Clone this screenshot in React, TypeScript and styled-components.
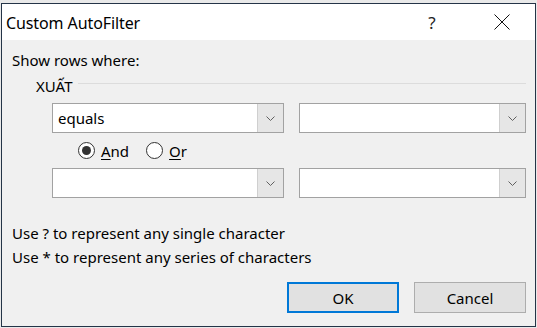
import React from 'react'
import styled, { createGlobalStyle } from 'styled-components'

const Global = createGlobalStyle`
    html, body {
        margin: 0;
        padding: 0;
        background: #f3f3f3;
    }
    body {
        font-family: "Noto Sans", "Liberation Sans", sans-serif;
    }
`

const Page = styled.div`
    width: 537px;
    height: 328px;
    overflow: hidden;
    background: #e9e9e9;
    padding: 3px 0 0 1px;
    box-sizing: border-box;
`

const Window = styled.div`
    width: 535px;
    height: 324px;
    box-sizing: border-box;
    border: 1px solid #243447;
    background: #f0f0f0;
    display: flex;
    flex-direction: column;
    color: #000;
`

const TitleBar = styled.div`
    height: 36px;
    background: #fff;
    display: flex;
    align-items: center;
    padding-left: 4px;
`

const Title = styled.div`
    flex: 1;
    font-size: 16px;
    letter-spacing: -0.1px;
    margin-top: 1px;
`

const CaptionButton = styled.div`
    width: 46px;
    height: 36px;
    display: flex;
    align-items: center;
    justify-content: center;
    font-size: 17px;
    color: #222;
`

const HelpButton = styled(CaptionButton)`
    margin-right: 24px;
`

const CloseButton = styled(CaptionButton)`
    margin-right: 10px;
`

const Body = styled.div`
    flex: 1;
    display: flex;
    flex-direction: column;
    padding: 10px 9px 0 10px;
    font-size: 15px;
`

const Label = styled.div`
    line-height: 20px;
`

const GroupHeader = styled.div`
    display: flex;
    align-items: center;
    gap: 6px;
    padding-left: 24px;
    margin-top: 6px;
    line-height: 20px;
`

const Rule = styled.div`
    flex: 1;
    height: 1px;
    background: #dcdcdc;
    margin-top: -5px;
`

const Criteria = styled.div`
    display: flex;
    flex-direction: column;
    padding-left: 40px;
    margin-top: 7px;
`

const ComboRow = styled.div`
    display: flex;
    gap: 15px;
`

const Combo = styled.div<{ $w: number }>`
    width: ${p => p.$w}px;
    height: 30px;
    box-sizing: border-box;
    border: 1px solid #a2a2a2;
    background: #fff;
    display: flex;
`

const ComboText = styled.div`
    flex: 1;
    padding-left: 5px;
    line-height: 28px;
`

const DropButton = styled.div`
    width: 25px;
    border-left: 1px solid #cfcfcf;
    background: #e6e6e6;
    display: flex;
    align-items: center;
    justify-content: center;
`

const RadioRow = styled.div`
    display: flex;
    align-items: center;
    gap: 17px;
    padding-left: 26px;
    height: 35px;
`

const RadioOption = styled.label`
    display: flex;
    align-items: center;
    gap: 6px;
`

const Circle = styled.span<{ $on?: boolean }>`
    width: 17px;
    height: 17px;
    box-sizing: border-box;
    border: 1px solid #333;
    border-radius: 50%;
    background: #fff;
    display: flex;
    align-items: center;
    justify-content: center;
    &::after {
        content: '';
        width: 9px;
        height: 9px;
        border-radius: 50%;
        background: ${p => (p.$on ? '#333' : 'transparent')};
    }
`

const Key = styled.span`
    text-decoration: underline;
    text-underline-offset: 2px;
`

const Hints = styled.div`
    margin-top: 23px;
    line-height: 24px;
`

const Buttons = styled.div`
    display: flex;
    justify-content: flex-end;
    gap: 15px;
    margin-top: 13px;
`

const Button = styled.div<{ $default?: boolean }>`
    width: 112px;
    height: 31px;
    box-sizing: border-box;
    background: #e1e1e1;
    border: ${p => (p.$default ? '2px solid #0078d7' : '1px solid #adadad')};
    display: flex;
    align-items: center;
    justify-content: center;
`

const Chevron = () => (
    <svg width="9" height="5" viewBox="0 0 9 5">
        <path d="M0.5 0.5 L4.5 4.5 L8.5 0.5" fill="none" stroke="#606060" strokeWidth="1" />
    </svg>
)

const CloseIcon = () => (
    <svg width="16" height="16" viewBox="0 0 16 16">
        <path d="M0.5 0.5 L15.5 15.5 M15.5 0.5 L0.5 15.5" stroke="#111" strokeWidth="1" />
    </svg>
)

const ComboBox: React.FC<{ width: number; value?: string }> = ({ width, value }) => (
    <Combo $w={width}>
        <ComboText>{value}</ComboText>
        <DropButton>
            <Chevron />
        </DropButton>
    </Combo>
)

const App: React.FC = () => {
    return (
        <Page>
            <Global />
            <Window>
                <TitleBar>
                    <Title>Custom AutoFilter</Title>
                    <HelpButton>?</HelpButton>
                    <CloseButton>
                        <CloseIcon />
                    </CloseButton>
                </TitleBar>
                <Body>
                    <Label>Show rows where:</Label>
                    <GroupHeader>
                        <span>XUẤT</span>
                        <Rule />
                    </GroupHeader>
                    <Criteria>
                        <ComboRow>
                            <ComboBox width={232} value="equals" />
                            <ComboBox width={228} />
                        </ComboRow>
                        <RadioRow>
                            <RadioOption>
                                <Circle $on />
                                <span><Key>A</Key>nd</span>
                            </RadioOption>
                            <RadioOption>
                                <Circle />
                                <span><Key>O</Key>r</span>
                            </RadioOption>
                        </RadioRow>
                        <ComboRow>
                            <ComboBox width={232} />
                            <ComboBox width={228} />
                        </ComboRow>
                    </Criteria>
                    <Hints>
                        <div>Use ? to represent any single character</div>
                        <div>Use * to represent any series of characters</div>
                    </Hints>
                    <Buttons>
                        <Button $default>OK</Button>
                        <Button>Cancel</Button>
                    </Buttons>
                </Body>
            </Window>
        </Page>
    )
}

export default App
